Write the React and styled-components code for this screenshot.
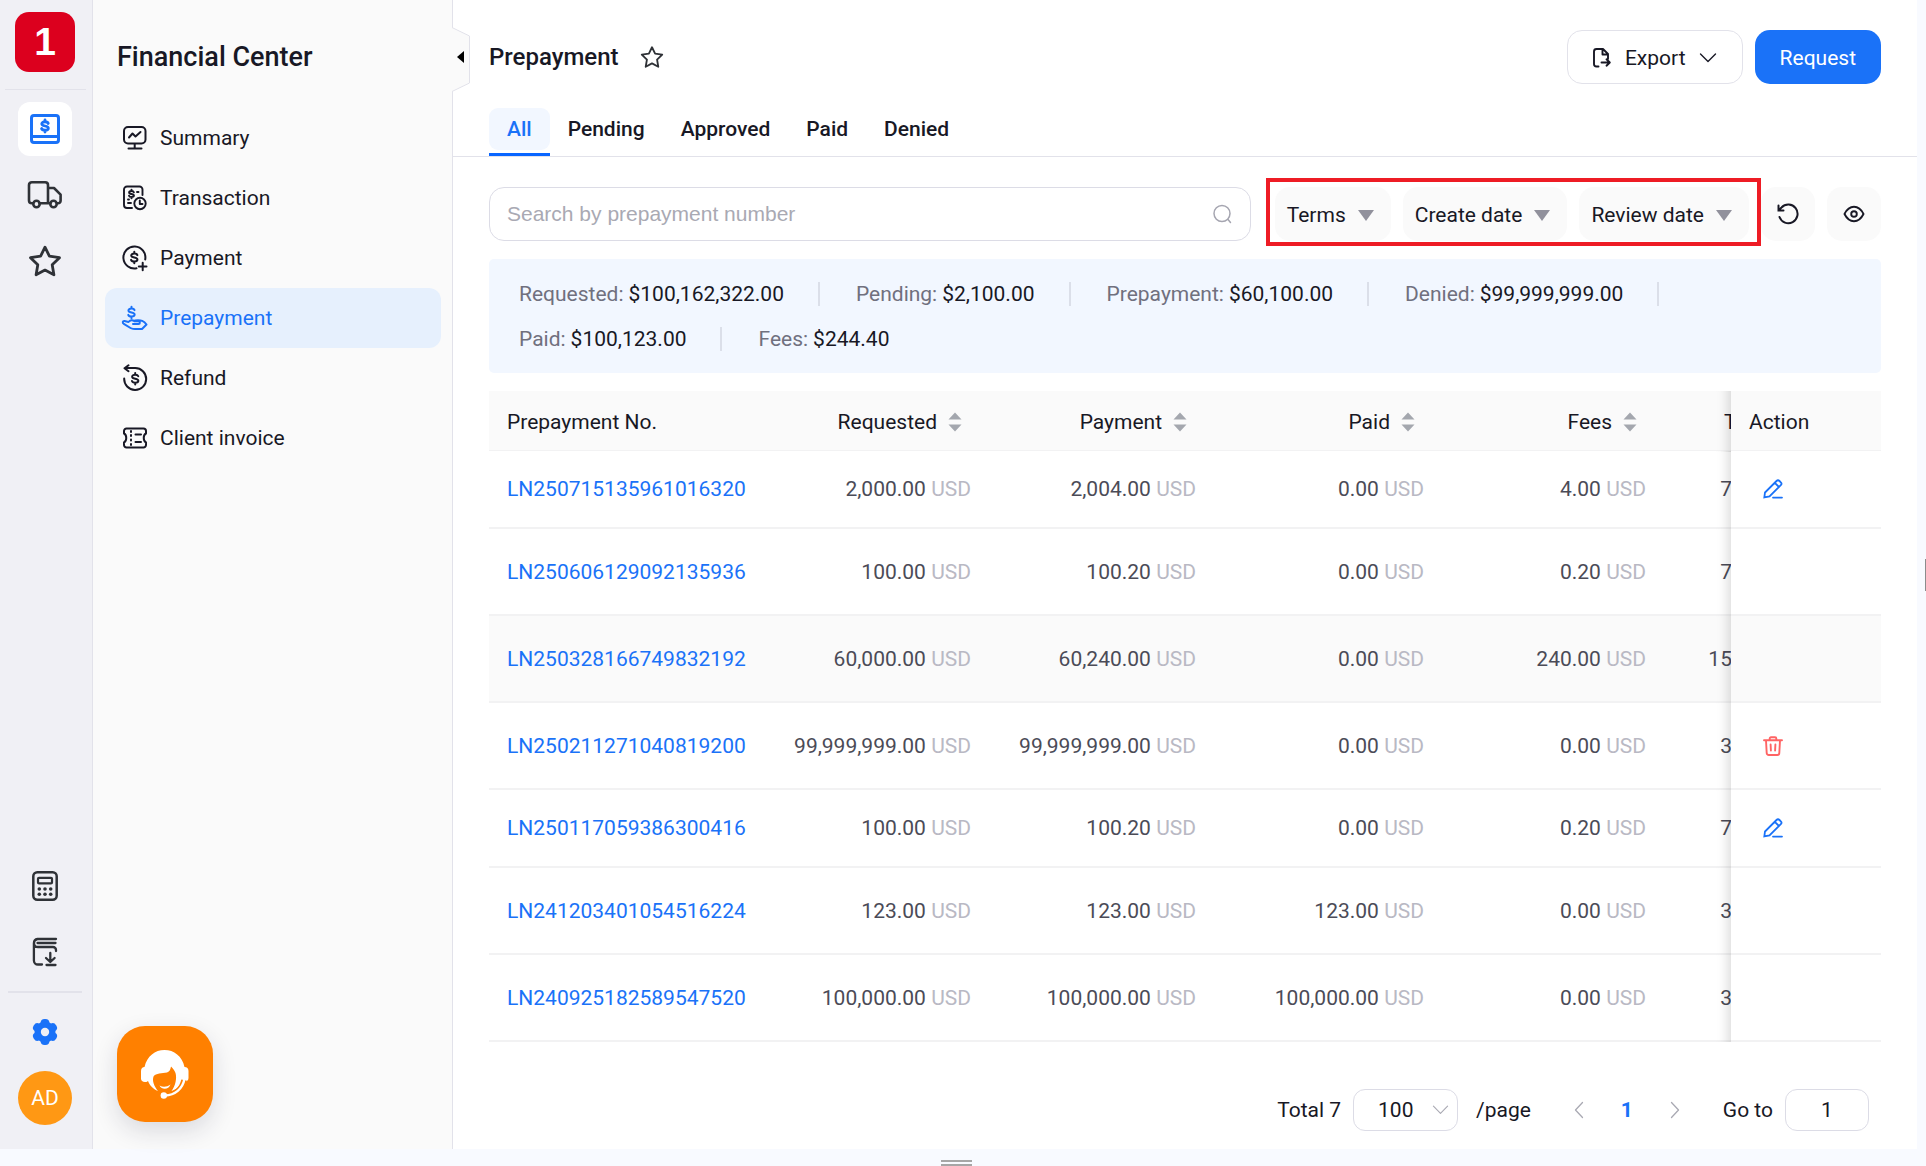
import React, { useState } from 'react';
import styled, { createGlobalStyle, css } from 'styled-components';

const c = {
  ink: '#181825',
  icon: '#2f3237',
  text: '#4b4b57',
  muted: '#70707e',
  faint: '#b9b9c4',
  line: '#e2e2ea',
  rowLine: '#f2f2f3',
  blue: '#1a72f8',
  soft: '#fafafa',
  frame: '#f8faff',
};

const GlobalStyle = createGlobalStyle`
  *, *::before, *::after { box-sizing: border-box; }
  body {
    margin: 0;
    background: ${c.frame};
    color: ${c.ink};
    font: 400 21px/24px Roboto, "Liberation Sans", sans-serif;
  }
  button, select, input { font: inherit; color: inherit; margin: 0; }
  button { background: none; border: 0; padding: 0; cursor: pointer; }
  a { text-decoration: none; }
  svg { display: block; flex: none; }
`;

const Page = styled.div`
  display: flex;
  flex-direction: column;
  min-height: 100vh;
`;

const Shell = styled.div`
  display: flex;
  flex: 1;
`;

const Rail = styled.nav`
  display: flex;
  flex-direction: column;
  align-items: center;
  gap: 12px;
  flex: none;
  width: 93px;
  padding: 12px 2px 24px 0;
  background: #f0f0f5;
  border-right: 1px solid ${c.line};
`;

const Logo = styled.div`
  width: 60px;
  height: 60px;
  border-radius: 14px;
  background: #dc001e;
  color: #fff;
  font: 700 39px/60px "Liberation Sans", Arial, sans-serif;
  text-align: center;
`;

const RailLine = styled.div`
  width: ${(p) => (p.$thick ? 74 : 81)}px;
  height: ${(p) => (p.$thick ? 2 : 1)}px;
  margin-top: ${(p) => (p.$thick ? 0 : 5)}px;
  background: ${c.line};
`;

const RailButton = styled.button`
  display: grid;
  place-items: center;
  width: 54px;
  height: 54px;
  border-radius: 12px;
  color: ${(p) => (p.$active || p.$accent ? c.blue : c.icon)};
  background: ${(p) => (p.$active ? '#fff' : 'transparent')};
`;

const RailFoot = styled.div`
  display: flex;
  flex-direction: column;
  align-items: center;
  gap: 12px;
  margin-top: auto;
`;

const Avatar = styled.button`
  width: 54px;
  height: 54px;
  border-radius: 50%;
  background: #ff9814;
  color: #fff;
`;

const Sidebar = styled.aside`
  display: flex;
  flex-direction: column;
  flex: none;
  width: 360px;
  padding: 37px 11px 27px 12px;
  background: ${c.soft};
  border-right: 1px solid ${c.line};
`;

const SideTitle = styled.h1`
  margin: 0 12px 31px;
  font-size: 27px;
  line-height: 40px;
  font-weight: 500;
`;

const SideItem = styled.a`
  display: flex;
  align-items: center;
  gap: 11px;
  height: 60px;
  padding: 0 16px;
  border-radius: 12px;
  color: ${(p) => (p.$active ? c.blue : c.ink)};
  background: ${(p) => (p.$active ? '#e6f0fd' : 'transparent')};
`;

const ChatButton = styled.button`
  display: grid;
  place-items: center;
  width: 96px;
  height: 96px;
  margin: auto 0 0 12px;
  border-radius: 28px;
  background: #ff8000;
  box-shadow: 0 9px 24px rgba(30, 30, 60, 0.14);
`;

const Main = styled.main`
  position: relative;
  flex: 1;
  min-width: 0;
  padding-top: 30px;
  background: #fff;
`;

const Collapse = styled.button`
  position: absolute;
  left: -1px;
  top: 27px;
`;

const Header = styled.header`
  display: flex;
  align-items: center;
  gap: 12px;
  height: 54px;
  padding: 0 36px;
`;

const Title = styled.h2`
  margin: 0;
  font-size: 24px;
  line-height: 30px;
  font-weight: 500;
`;

const StarButton = styled.button`
  margin: 0 auto 0 9px;
  color: ${c.icon};
`;

const ExportButton = styled.button`
  display: flex;
  align-items: center;
  gap: 13px;
  height: 54px;
  padding: 2px 25px 0 24px;
  border: 1px solid ${c.line};
  border-radius: 15px;
`;

const RequestButton = styled.button`
  height: 54px;
  padding: 2px 25px 0;
  border-radius: 15px;
  background: ${c.blue};
  color: #fff;
`;

const Tabs = styled.div`
  display: flex;
  margin-top: 24px;
  padding: 0 36px;
  border-bottom: 1px solid ${c.line};
`;

const Tab = styled.button`
  padding-bottom: 3px;
  border-bottom: 3px solid ${(p) => (p.$active ? '#0a66ff' : 'transparent')};
  font-weight: 500;
  color: ${(p) => (p.$active ? c.blue : c.ink)};
`;

const TabLabel = styled.span`
  display: block;
  padding: 0 18px;
  line-height: 42px;
  border-radius: 9px;
  background: ${(p) => (p.$active ? '#f2f7ff' : 'transparent')};
`;

const Body = styled.div`
  padding: 30px 36px 18px;
`;

const Toolbar = styled.div`
  display: flex;
  gap: 12px;
`;

const SearchBox = styled.label`
  display: flex;
  align-items: center;
  flex: 1;
  height: 54px;
  margin-right: 12px;
  padding: 0 17px;
  border: 1px solid #dcdce6;
  border-radius: 15px;
  color: #a5a5b0;
`;

const SearchInput = styled.input`
  flex: 1;
  min-width: 0;
  padding: 0;
  border: 0;
  outline: 0;
  background: none;
  color: ${c.ink};
  font-family: "Liberation Sans", Arial, sans-serif;
  &::placeholder { color: #a9a9b3; opacity: 1; }
`;

const Filters = styled.div`
  position: relative;
  display: flex;
  gap: 12px;
`;

const Highlight = styled.div`
  position: absolute;
  inset: -9px -12px -5px -9px;
  border: 4px solid #ee1c25;
  pointer-events: none;
`;

const softControl = css`
  height: 54px;
  border-radius: 15px;
  background: ${c.soft};
`;

const FilterButton = styled.button`
  ${softControl}
  display: flex;
  align-items: center;
  gap: 12px;
  padding: 2px 17px 0 12px;
`;

const Caret = styled.span`
  border: solid transparent;
  border-width: 11px 8px 0;
  border-top-color: #91919c;
`;

const SquareButton = styled.button`
  ${softControl}
  display: grid;
  place-items: center;
  width: 54px;
`;

const Summary = styled.dl`
  display: flex;
  flex-wrap: wrap;
  gap: 21px 36px;
  margin: 18px 0;
  padding: 23px 30px 22px;
  border-radius: 5px;
  background: #f2f7ff;
`;

const Stat = styled.div`
  display: flex;
  gap: 5px;
  padding-right: 34px;
  border-right: ${(p) => (p.$last ? '0' : '2px solid #dbdfe9')};
  dt { color: ${c.muted}; }
  dd { margin: 0; }
`;

const TableScroll = styled.div`
  overflow-x: auto;
  scrollbar-width: none;
  padding-bottom: 1px;
`;

const Table = styled.table`
  width: calc(100% + 70px);
  table-layout: fixed;
  border-collapse: separate;
  border-spacing: 0;
`;

const pinned = css`
  position: sticky;
  right: 0;
  &::before {
    content: '';
    position: absolute;
    top: 0;
    bottom: -2px;
    left: -45px;
    width: 45px;
    box-shadow: inset -15px 0 12px -12px rgba(0, 0, 0, 0.15);
    pointer-events: none;
  }
`;

const Cell = styled.td`
  height: ${(p) => (p.$tall ? 87 : 78)}px;
  padding: 0 18px;
  text-align: ${(p) => (p.$right ? 'right' : 'left')};
  white-space: nowrap;
  color: ${c.text};
  background: ${(p) => (p.$shade ? c.soft : '#fff')};
  border-bottom: 2px solid ${c.rowLine};
  ${(p) => p.$pinned && pinned}
`;

const HeadCell = styled.th`
  height: 60px;
  padding: 2px 18px 0;
  text-align: ${(p) => (p.$right ? 'right' : 'left')};
  font-weight: 400;
  white-space: nowrap;
  background: ${c.soft};
  border-bottom: 1px solid ${c.rowLine};
  ${(p) => p.$pinned && pinned}
`;

const SortButton = styled.button`
  display: inline-flex;
  align-items: center;
  gap: 11px;
  padding-right: 9px;
`;

const Currency = styled.span`
  color: ${c.faint};
`;

const NumberLink = styled.a`
  color: ${c.blue};
`;

const RowAction = styled.button`
  display: block;
  padding: 0 14px;
  color: ${(p) => (p.$danger ? '#ff6464' : c.blue)};
`;

const Pager = styled.div`
  display: flex;
  justify-content: flex-end;
  align-items: center;
  gap: 12px;
  margin-top: 46px;
  padding-right: 12px;
`;

const SizeBox = styled.span`
  display: grid;
  align-items: center;
  width: 105px;
  margin-right: 6px;
  color: #a9a9b3;
  > * { grid-area: 1 / 1; }
  > svg { justify-self: end; margin-right: 9px; pointer-events: none; }
`;

const fieldBox = css`
  height: 42px;
  border: 1px solid #dcdce6;
  border-radius: 12px;
  background: #fff;
  color: ${c.ink};
`;

const SizeSelect = styled.select`
  ${fieldBox}
  width: 100%;
  padding: 0 24px;
  appearance: none;
`;

const Pages = styled.nav`
  display: flex;
  margin: 0 12px;
`;

const PageButton = styled.button`
  display: grid;
  place-items: center;
  width: 48px;
  height: 42px;
  font-weight: 700;
  color: ${(p) => (p.$current ? c.blue : '#a9a9b3')};
`;

const GoTo = styled.label`
  display: flex;
  align-items: center;
  gap: 12px;
`;

const GoInput = styled.input`
  ${fieldBox}
  width: 84px;
  padding: 0;
  text-align: center;
`;

const BottomStrip = styled.footer`
  display: flex;
  flex-direction: column;
  align-items: center;
  gap: 2px;
  height: 17px;
  padding: 11px 14px 0 0;
`;

const Grip = styled.span`
  flex: none;
  width: 31px;
  height: 2px;
  background: #a6a6a6;
`;

const RightStrip = styled.div`
  display: flex;
  align-items: center;
  justify-content: flex-end;
  flex: none;
  width: 9px;
`;

const SideGrip = styled.span`
  width: 1px;
  height: 32px;
  background: #8c8c8c;
`;

function Svg({ w = 28, h = w, box, sw = 2, children }) {
  return (
    <svg
      width={w}
      height={h}
      viewBox={box || `0 0 ${w} ${h}`}
      fill="none"
      stroke="currentColor"
      strokeWidth={sw}
      strokeLinecap="round"
      strokeLinejoin="round"
      aria-hidden="true"
    >
      {children}
    </svg>
  );
}

function Dollar({ x, y, s = 1, sw = 2 }) {
  return (
    <g transform={`translate(${x} ${y}) scale(${s})`} strokeWidth={sw / s}>
      <path d="M3.6 -2.8C3.2 -4.1 1.8 -4.7 0 -4.7C-2.2 -4.7 -3.6 -3.8 -3.6 -2.4C-3.6 1 3.7 -1 3.7 2.4C3.7 3.9 2.2 4.7 0 4.7C-2 4.7 -3.4 4.1 -3.8 2.8M0 -6.7V-4.7M0 4.7V6.7" />
    </g>
  );
}

const LedgerIcon = () => (
  <Svg w={30} sw={3}>
    <rect x="1.5" y="1.5" width="27" height="27" rx="2.5" />
    <path d="M2 22.5H28" />
    <Dollar x={15} y={12} s={0.9} sw={2.8} />
  </Svg>
);

const TruckIcon = () => (
  <Svg w={36} h={30} sw={2.6}>
    <path d="M6 23.3H4.8A2.8 2.8 0 0 1 2 20.5V5A2.8 2.8 0 0 1 4.8 2.2H18.2A2.8 2.8 0 0 1 21 5V23.3M12.5 23.3H23.5M21 8H27L33.6 14.6V20.8A2.5 2.5 0 0 1 31.1 23.3H30" />
    <circle cx="9.5" cy="24" r="3.2" />
    <circle cx="26.5" cy="24" r="3.2" />
  </Svg>
);

const StarIcon = ({ size = 34, sw = 2.8 }) => (
  <Svg w={size} box="0 0 34 34" sw={sw}>
    <path d="M17 3.2L21.4 12.2L31.5 13.7L24.2 20.8L25.9 30.8L17 26.1L8.1 30.8L9.8 20.8L2.5 13.7L12.6 12.2Z" />
  </Svg>
);

const CalcIcon = () => (
  <Svg w={30} sw={2.5}>
    <rect x="3.3" y="1.3" width="23.4" height="27.4" rx="4" />
    <rect x="8" y="6.8" width="14" height="5.6" rx="1" strokeWidth="2.2" />
    <g fill="currentColor" stroke="none">
      {[9.3, 15, 20.7].map((x) => (
        <React.Fragment key={x}>
          <circle cx={x} cy="18" r="1.8" />
          <circle cx={x} cy="23.3" r="1.8" />
        </React.Fragment>
      ))}
    </g>
  </Svg>
);

const BookIcon = () => (
  <Svg w={30} sw={2.3}>
    <path d="M26 2H7.5A4.3 4.3 0 0 0 3.9 6.2V23.5A4 4 0 0 0 7.9 27.5H12M4 6A4 4 0 0 0 8 10H23A3 3 0 0 1 26 13V14M7.5 6H25.5" />
    <path d="M20.3 16V24.5M16 21L20.3 25L24.6 21M16.5 28H25.5" />
  </Svg>
);

const GearIcon = () => (
  <Svg w={28}>
    <g fill="currentColor" stroke="none">
      <circle cx="14" cy="14" r="10.5" />
      {[0, 60, 120, 180, 240, 300].map((a) => (
        <rect key={a} x="9.6" y="1" width="8.8" height="12" rx="4" transform={`rotate(${a} 14 14)`} />
      ))}
      <circle cx="14" cy="14" r="4.2" fill="#f0f0f5" />
    </g>
  </Svg>
);

const SummaryIcon = () => (
  <Svg>
    <rect x="3" y="3" width="21.5" height="16.5" rx="4" />
    <path d="M8 13.5L11.5 9.5L14.5 12.5L19.5 8M13.7 20V24M7.5 24.5H20.5" />
  </Svg>
);

const TransactionIcon = () => (
  <Svg sw={1.9}>
    <path d="M21.5 11V5.5A3 3 0 0 0 18.5 2.5H6A3 3 0 0 0 3 5.5V21A3 3 0 0 0 6 24H11M16 8H17.5M7 19H10M7 15.5H8" />
    <Dollar x={10.5} y={10} s={0.65} sw={2} />
    <circle cx="19" cy="19.5" r="5.7" />
    <path d="M18.8 16.5V20H21.5" />
  </Svg>
);

const PaymentIcon = () => (
  <Svg>
    <path d="M24.2 15.5A11 11 0 1 0 15.5 24.3M17.8 22.5H25.5M21.7 18.7V26.3" />
    <Dollar x={13.3} y={13.5} s={0.85} />
  </Svg>
);

const PrepaymentIcon = () => (
  <Svg>
    <Dollar x={10.5} y={8.5} s={0.85} />
    <path d="M12 20H17.5C19.3 20 19.3 17.3 17.5 17.3H13.5C11.5 15.5 9 16 7.5 18L3.5 17C1.5 16.8 1.2 19 2.8 19.8L9.5 24C12 25.5 16 25 21 25L25.5 20.5C23 17 20.5 15.8 14 16.5" />
  </Svg>
);

const RefundIcon = () => (
  <Svg>
    <path d="M3.2 14.5A11 11 0 1 0 14 4H4.5M7.5 1.3L3.5 4.2L7.5 7.2" />
    <Dollar x={14.2} y={14.7} s={0.85} />
  </Svg>
);

const InvoiceIcon = () => (
  <Svg>
    <path d="M5.5 4.5H22.5A2.5 2.5 0 0 1 25 7V9.5C22 11 22 17 25 18.5V21A2.5 2.5 0 0 1 22.5 23.5H5.5A2.5 2.5 0 0 1 3 21V18.5C6 17 6 11 3 9.5V7A2.5 2.5 0 0 1 5.5 4.5Z" />
    <path d="M10 7V8M10 11V12M10 15.5V16.5M10 20V21M14.5 10.5H20M14.5 18H20" />
  </Svg>
);

const ChatIcon = () => (
  <svg width="48" height="49" viewBox="0 0 48 49" aria-hidden="true">
    <path
      fill="#fff"
      d="M7 31L5.5 32H4C1.5 32 0 30.5 0 28.5V21C0 18.5 1.5 17 3.5 17C6 6 14 0 23.5 0C33 0 41 6 43.5 17C46 17 47.5 18.5 47.5 21V28C47.5 30 46 31.5 44 31.5L41.5 30C40 35 36 39.5 30.5 41C34.5 36 36 28 34.5 23C33.5 20 31.5 18 30 16.5C29.5 20 28 22 26 22.5C21 23.5 15 23 12.5 26.5C11 31 13 36 17 41C12 39 8.5 35 7 31Z"
    />
    <path d="M43 30C41 39 34 45 24 45.5" fill="none" stroke="#ff8000" strokeWidth="5.5" />
    <path d="M43.5 29C41.5 39 34 45.2 24 45.5" fill="none" stroke="#fff" strokeWidth="2.4" />
    <circle cx="22.8" cy="45.5" r="3.2" fill="#fff" />
    <path d="M18.5 35.5C22 37.5 26 37 29.5 34.5C28 39.5 21 40.5 18.5 35.5Z" fill="#fff" />
  </svg>
);

const CollapseIcon = () => (
  <svg width="18" height="65" viewBox="0 0 18 65" aria-hidden="true">
    <path d="M0 0.5L17.5 9V56L0 64.5" fill="#fafafa" stroke="#e2e2ea" />
    <path d="M5 30L12 24V36Z" fill="#000" />
  </svg>
);

const ExportIcon = () => (
  <Svg w={20} h={22} sw={1.9}>
    <path d="M6.5 19.5H4.5A2.5 2.5 0 0 1 2 17V4.5A2.5 2.5 0 0 1 4.5 2H11L16 7V12M10.5 2.5V7.5H15.5M9.5 15.5H17.5M14.5 12.3L17.8 15.5L14.5 18.7" />
  </Svg>
);

const ChevronDown = ({ sw = 1.4, w = 18 }) => (
  <Svg w={w} h={12} box="0 0 18 12" sw={sw}>
    <path d="M1.5 2L9 9.5L16.5 2" />
  </Svg>
);

const SearchIcon = () => (
  <Svg w={20} sw={1.5}>
    <circle cx="9" cy="9.5" r="8" />
    <path d="M15 15.5L17.5 18.5" />
  </Svg>
);

const ResetIcon = () => (
  <Svg w={24} sw={2}>
    <path d="M3.5 15A9.3 9.3 0 1 0 5.5 5.5L3 8M2.5 3.5V8.5H7.5" strokeLinejoin="miter" />
  </Svg>
);

const EyeIcon = () => (
  <Svg w={22} sw={1.9}>
    <path d="M1.5 11C4 6 7.2 3.8 11 3.8S18 6 20.5 11C18 16 14.8 18.2 11 18.2S4 16 1.5 11Z" />
    <circle cx="11" cy="11" r="2.8" />
  </Svg>
);

const SortIcon = () => (
  <svg width="14" height="20" viewBox="0 0 14 20" aria-hidden="true" fill="#a4a7ae">
    <path d="M7 0.5L13.5 7.5H0.5ZM7 19.5L13.5 12.5H0.5Z" />
  </svg>
);

const EditIcon = () => (
  <Svg w={20} sw={1.8}>
    <path strokeLinejoin="miter" d="M1.3 18.5L2 13.5L13.5 2C14.5 1 15.5 1 16.5 2L17.8 3.3C18.8 4.3 18.8 5.2 17.8 6.2L6.5 17.5L1.3 18.5ZM11.8 3.8L16 8M10 18.6H19" />
  </Svg>
);

const TrashIcon = () => (
  <Svg w={20} sw={1.9}>
    <path d="M1 4.3H19M6.7 4V2.5Q6.7 1.3 8 1.3H12Q13.3 1.3 13.3 2.5V4M3 4.5L3.7 17A2 2 0 0 0 5.7 19H14.3A2 2 0 0 0 16.3 17L17 4.5M7.6 8.5L7.9 14.5M12.4 8.5L12.1 14.5" />
  </Svg>
);

const PageArrow = ({ next }) => (
  <Svg w={10} h={18} sw={1.3}>
    <path d={next ? 'M1.5 1.5L8.5 9L1.5 16.5' : 'M8.5 1.5L1.5 9L8.5 16.5'} />
  </Svg>
);

const menu = [
  ['Summary', SummaryIcon],
  ['Transaction', TransactionIcon],
  ['Payment', PaymentIcon],
  ['Prepayment', PrepaymentIcon],
  ['Refund', RefundIcon],
  ['Client invoice', InvoiceIcon],
];

const stats = [
  ['Requested:', '$100,162,322.00'],
  ['Pending:', '$2,100.00'],
  ['Prepayment:', '$60,100.00'],
  ['Denied:', '$99,999,999.00'],
  ['Paid:', '$100,123.00'],
  ['Fees:', '$244.40'],
];

const rows = [
  { no: 'LN250715135961016320', money: ['2,000.00', '2,004.00', '0.00', '4.00'], terms: '7 Days', action: 'edit' },
  { no: 'LN250606129092135936', money: ['100.00', '100.20', '0.00', '0.20'], terms: '7 Days' },
  { no: 'LN250328166749832192', money: ['60,000.00', '60,240.00', '0.00', '240.00'], terms: '15 Days', shade: true },
  { no: 'LN250211271040819200', money: ['99,999,999.00', '99,999,999.00', '0.00', '0.00'], terms: '3 Days', action: 'delete' },
  { no: 'LN250117059386300416', money: ['100.00', '100.20', '0.00', '0.20'], terms: '7 Days', action: 'edit' },
  { no: 'LN241203401054516224', money: ['123.00', '123.00', '123.00', '0.00'], terms: '3 Days' },
  { no: 'LN240925182589547520', money: ['100,000.00', '100,000.00', '100,000.00', '0.00'], terms: '3 Days' },
];

const tabs = ['All', 'Pending', 'Approved', 'Paid', 'Denied'];

export default function App() {
  const [tab, setTab] = useState('All');
  return (
    <Page>
      <GlobalStyle />
      <Shell>
        <Rail aria-label="Apps">
          <Logo>1</Logo>
          <RailLine />
          <RailButton $active aria-label="Finance"><LedgerIcon /></RailButton>
          <RailButton aria-label="Shipping"><TruckIcon /></RailButton>
          <RailButton aria-label="Favorites"><StarIcon /></RailButton>
          <RailFoot>
            <RailButton aria-label="Calculator"><CalcIcon /></RailButton>
            <RailButton aria-label="Downloads"><BookIcon /></RailButton>
            <RailLine $thick />
            <RailButton $accent aria-label="Settings"><GearIcon /></RailButton>
            <Avatar>AD</Avatar>
          </RailFoot>
        </Rail>

        <Sidebar>
          <SideTitle>Financial Center</SideTitle>
          {menu.map(([name, Icon]) => (
            <SideItem key={name} href="#" $active={name === 'Prepayment'}>
              <Icon />
              {name}
            </SideItem>
          ))}
          <ChatButton aria-label="Support"><ChatIcon /></ChatButton>
        </Sidebar>

        <Main>
          <Collapse aria-label="Collapse menu"><CollapseIcon /></Collapse>
          <Header>
            <Title>Prepayment</Title>
            <StarButton aria-label="Add to favorites"><StarIcon size={24} sw={2.6} /></StarButton>
            <ExportButton>
              <ExportIcon />
              Export
              <ChevronDown />
            </ExportButton>
            <RequestButton>Request</RequestButton>
          </Header>
          <Tabs role="tablist">
            {tabs.map((name) => (
              <Tab key={name} role="tab" aria-selected={tab === name} $active={tab === name} onClick={() => setTab(name)}>
                <TabLabel $active={tab === name}>{name}</TabLabel>
              </Tab>
            ))}
          </Tabs>

          <Body>
            <Toolbar>
              <SearchBox>
                <SearchInput type="text" aria-label="Search" placeholder="Search by prepayment number" />
                <SearchIcon />
              </SearchBox>
              <Filters>
                {['Terms', 'Create date', 'Review date'].map((name) => (
                  <FilterButton key={name}>
                    {name}
                    <Caret />
                  </FilterButton>
                ))}
                <Highlight />
              </Filters>
              <SquareButton aria-label="Reset"><ResetIcon /></SquareButton>
              <SquareButton aria-label="Columns"><EyeIcon /></SquareButton>
            </Toolbar>

            <Summary>
              {stats.map(([label, value], i) => (
                <Stat key={label} $last={i === stats.length - 1}>
                  <dt>{label}</dt>
                  <dd>{value}</dd>
                </Stat>
              ))}
            </Summary>

            <TableScroll>
              <Table>
                <colgroup>
                  <col />
                  <col width="218" />
                  <col width="225" />
                  <col width="228" />
                  <col width="222" />
                  <col width="137" />
                  <col width="150" />
                </colgroup>
                <thead>
                  <tr>
                    <HeadCell>Prepayment No.</HeadCell>
                    {['Requested', 'Payment', 'Paid', 'Fees'].map((name) => (
                      <HeadCell key={name} $right>
                        <SortButton>
                          {name}
                          <SortIcon />
                        </SortButton>
                      </HeadCell>
                    ))}
                    <HeadCell $right>Terms</HeadCell>
                    <HeadCell $pinned>Action</HeadCell>
                  </tr>
                </thead>
                <tbody>
                  {rows.map((r) => {
                    const look = { $shade: r.shade, $tall: r.action !== 'edit' };
                    return (
                      <tr key={r.no}>
                        <Cell {...look}><NumberLink href="#">{r.no}</NumberLink></Cell>
                        {r.money.map((m, k) => (
                          <Cell key={k} {...look} $right>
                            {m} <Currency>USD</Currency>
                          </Cell>
                        ))}
                        <Cell {...look} $right>{r.terms}</Cell>
                        <Cell {...look} $pinned>
                          {r.action === 'edit' && <RowAction aria-label="Edit"><EditIcon /></RowAction>}
                          {r.action === 'delete' && <RowAction $danger aria-label="Delete"><TrashIcon /></RowAction>}
                        </Cell>
                      </tr>
                    );
                  })}
                </tbody>
              </Table>
            </TableScroll>

            <Pager>
              <span>Total 7</span>
              <SizeBox>
                <SizeSelect aria-label="Rows per page" defaultValue="100">
                  <option>100</option>
                </SizeSelect>
                <ChevronDown w={17} sw={1.2} />
              </SizeBox>
              <span>/page</span>
              <Pages aria-label="Pages">
                <PageButton aria-label="Previous page"><PageArrow /></PageButton>
                <PageButton $current>1</PageButton>
                <PageButton aria-label="Next page"><PageArrow next /></PageButton>
              </Pages>
              <GoTo>
                Go to
                <GoInput type="text" defaultValue="1" />
              </GoTo>
            </Pager>
          </Body>
        </Main>

        <RightStrip><SideGrip /></RightStrip>
      </Shell>
      <BottomStrip>
        <Grip />
        <Grip />
      </BottomStrip>
    </Page>
  );
}
